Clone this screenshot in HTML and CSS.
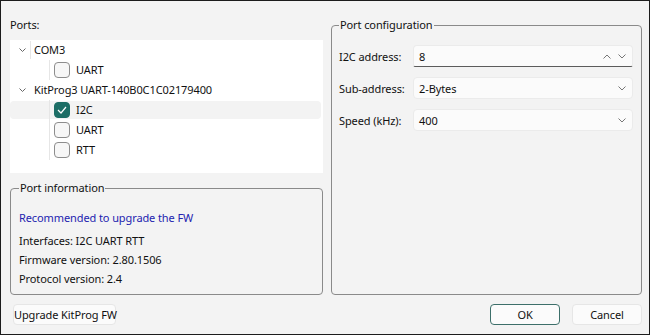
FILE: index.html
```html
<!DOCTYPE html>
<html lang="en">
<head>
<meta charset="UTF-8">
<title>Port settings</title>
<link rel="stylesheet" href="styles.css">
</head>
<body>

<div class="dialog">
  <div class="main">
    <div class="left">
      <div class="ports-label">Ports:</div>
      <div class="tree">
        <div class="row parent">
          <span class="expander"><svg width="7" height="4" viewBox="0 0 7 4"><path d="M0.5 0.5l3 3 3-3" stroke="#666" fill="none"/></svg></span>
          <span class="guide"></span>
          <span class="name">COM3</span>
        </div>
        <div class="row child">
          <span class="guide"></span>
          <span class="check"></span>
          <span class="name">UART</span>
        </div>
        <div class="row parent">
          <span class="expander"><svg width="7" height="4" viewBox="0 0 7 4"><path d="M0.5 0.5l3 3 3-3" stroke="#666" fill="none"/></svg></span>
          <span class="guide faint"></span>
          <span class="name">KitProg3 UART-140B0C1C02179400</span>
        </div>
        <div class="row child selected">
          <span class="guide"></span>
          <span class="check on"><svg width="10" height="8" viewBox="0 0 10 8"><path d="M1 4l3 3 5-6" stroke="#fff" stroke-width="1.2" fill="none"/></svg></span>
          <span class="name">I2C</span>
        </div>
        <div class="row child">
          <span class="guide"></span>
          <span class="check"></span>
          <span class="name">UART</span>
        </div>
        <div class="row child">
          <span class="guide"></span>
          <span class="check"></span>
          <span class="name">RTT</span>
        </div>
      </div>

      <fieldset class="group info">
        <legend>Port information</legend>
        <div class="notice">Recommended to upgrade the FW</div>
        <div class="line">Interfaces: I2C UART RTT</div>
        <div class="line">Firmware version: 2.80.1506</div>
        <div class="line">Protocol version: 2.4</div>
      </fieldset>
    </div>

    <fieldset class="group config">
      <legend>Port configuration</legend>
      <div class="field">
        <label>I2C address:</label>
        <div class="input focused">
          <span class="value">8</span>
          <span class="arrows">
            <svg width="8" height="5" viewBox="0 0 8 5"><path d="M0.5 4.5l3.5-3.5 3.5 3.5" stroke="#777" fill="none"/></svg>
            <svg width="8" height="5" viewBox="0 0 8 5"><path d="M0.5 0.5l3.5 3.5 3.5-3.5" stroke="#777" fill="none"/></svg>
          </span>
        </div>
      </div>
      <div class="field">
        <label>Sub-address:</label>
        <div class="input">
          <span class="value">2-Bytes</span>
          <span class="arrows">
            <svg width="8" height="5" viewBox="0 0 8 5"><path d="M0.5 0.5l3.5 3.5 3.5-3.5" stroke="#777" fill="none"/></svg>
          </span>
        </div>
      </div>
      <div class="field">
        <label>Speed (kHz):</label>
        <div class="input">
          <span class="value">400</span>
          <span class="arrows">
            <svg width="8" height="5" viewBox="0 0 8 5"><path d="M0.5 0.5l3.5 3.5 3.5-3.5" stroke="#777" fill="none"/></svg>
          </span>
        </div>
      </div>
    </fieldset>
  </div>

  <div class="footer">
    <button type="button" class="btn upgrade">Upgrade KitProg FW</button>
    <div class="actions">
      <button type="button" class="btn ok">OK</button>
      <button type="button" class="btn">Cancel</button>
    </div>
  </div>
</div>

</body>
</html>
```

FILE: styles.css
```css
* {
  box-sizing: border-box;
}

html, body {
  margin: 0;
  width: 650px;
  height: 335px;
  overflow: hidden;
}

body {
  font-family: "Noto Sans", "Open Sans", sans-serif;
  font-size: 11px;
  letter-spacing: -0.1px;
  color: #111;
  background: #f3f3f3;
  border: 1px solid #1c1c1c;
}

.dialog {
  display: flex;
  flex-direction: column;
  height: 100%;
  padding: 16px 7px 8px 9px;
}

.main {
  display: flex;
  gap: 8px;
  height: 278px;
}

.left {
  width: 313px;
  display: flex;
  flex-direction: column;
}

.ports-label {
  line-height: 16px;
  height: 16px;
}

/* tree */
.tree {
  margin-top: 7px;
  height: 133px;
  background: #fff;
}

.row {
  position: relative;
  display: flex;
  align-items: center;
  height: 20px;
  line-height: 20px;
}

.row.selected::before {
  content: "";
  position: absolute;
  left: 0;
  right: 2px;
  top: 1px;
  bottom: 1px;
  background: #f3f3f3;
  border-radius: 4px;
}

.row > * {
  position: relative;
}

.expander {
  width: 20px;
  display: flex;
  justify-content: flex-end;
  padding-right: 4px;
}

.guide {
  width: 1px;
  height: 18px;
  background: #e6e6e6;
  margin-right: 3px;
}

.guide.faint {
  background: transparent;
}

.row.child .guide {
  margin-left: 39px;
  height: 20px;
  margin-right: 4px;
}

.check {
  width: 16px;
  height: 16px;
  border: 1px solid #8d8d8d;
  border-radius: 4px;
  background: #f7f7f7;
  margin-right: 6px;
  display: flex;
  align-items: center;
  justify-content: center;
}

.check.on {
  background: #1d6e66;
  border-color: #1d6e66;
}

/* group boxes */
.group {
  margin: 0;
  border: 1px solid #8a8a8a;
  border-radius: 4px;
  padding: 0 8px;
}

.group legend {
  padding: 0 1px;
  line-height: 16px;
}

.info {
  margin-top: 7px;
  flex: 1;
  padding-top: 12px;
}

.notice {
  color: #2323b0;
  line-height: 19px;
  margin-bottom: 4px;
}

.line {
  line-height: 19px;
}

.config {
  flex: 1;
  padding: 12px 8px 0 7px;
}

.field {
  display: flex;
  align-items: center;
  margin-bottom: 10px;
}

.field label {
  width: 74px;
}

.input {
  flex: 1;
  height: 22px;
  display: flex;
  align-items: center;
  justify-content: space-between;
  padding: 0 6px 0 5px;
  background: #fbfbfb;
  border: 1px solid #ebebeb;
  border-radius: 4px;
}

.input.focused {
  border-bottom: 1px solid #5c5c5c;
  border-radius: 4px 4px 2px 2px;
}

.arrows {
  display: flex;
  gap: 7px;
}

/* buttons */
.footer {
  display: flex;
  justify-content: space-between;
  align-items: flex-end;
  margin-top: 9px;
  padding-left: 3px;
}

.actions {
  display: flex;
  gap: 12px;
}

.btn {
  font-family: inherit;
  font-size: 11px;
  letter-spacing: -0.1px;
  color: #111;
  height: 21px;
  width: 70px;
  padding: 0;
  white-space: nowrap;
  background: #fbfbfb;
  border: 1px solid #e6e6e6;
  border-radius: 4px;
}

.btn.upgrade {
  width: 103px;
}

.btn.ok {
  border-color: #3d6f6a;
}
```
